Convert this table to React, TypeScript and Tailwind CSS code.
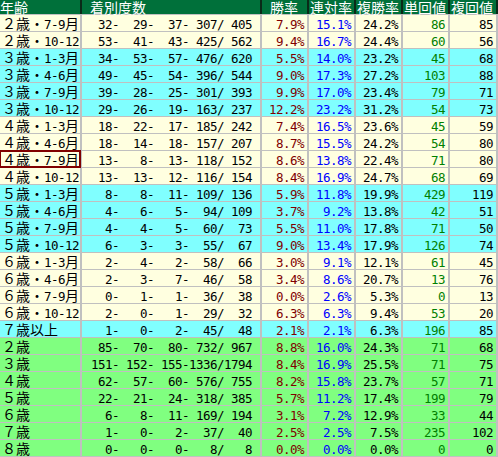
const cols = 'grid grid-cols-[80px_178px_45px_45px_45px_45px_46px] gap-x-[2px]'
const jp = "font-['Noto_Sans_CJK_JP','Noto_Sans_CJK_SC',sans-serif] text-[14px]"
const mono = "font-['DejaVu_Sans_Mono',monospace] text-[12.5px] tracking-[-0.53px] leading-none"

type Row = [string, number[], string, string, string, number, number, string]

const CREAM = 'bg-[#ffffe0]'
const CYAN = 'bg-[#80ffff]'
const GREEN = 'bg-[#80ff80]'

const rows: Row[] = [
  ['２歳・7-9月', [32, 29, 37, 307, 405], '7.9%', '15.1%', '24.2%', 86, 85, CREAM],
  ['２歳・10-12', [53, 41, 43, 425, 562], '9.4%', '16.7%', '24.4%', 60, 56, CREAM],
  ['３歳・1-3月', [34, 53, 57, 476, 620], '5.5%', '14.0%', '23.2%', 45, 68, CYAN],
  ['３歳・4-6月', [49, 45, 54, 396, 544], '9.0%', '17.3%', '27.2%', 103, 88, CYAN],
  ['３歳・7-9月', [39, 28, 25, 301, 393], '9.9%', '17.0%', '23.4%', 79, 71, CYAN],
  ['３歳・10-12', [29, 26, 19, 163, 237], '12.2%', '23.2%', '31.2%', 54, 73, CYAN],
  ['４歳・1-3月', [18, 22, 17, 185, 242], '7.4%', '16.5%', '23.6%', 45, 59, CREAM],
  ['４歳・4-6月', [18, 14, 18, 157, 207], '8.7%', '15.5%', '24.2%', 54, 80, CREAM],
  ['４歳・7-9月', [13, 8, 13, 118, 152], '8.6%', '13.8%', '22.4%', 71, 80, CREAM],
  ['４歳・10-12', [13, 13, 12, 116, 154], '8.4%', '16.9%', '24.7%', 68, 69, CREAM],
  ['５歳・1-3月', [8, 8, 11, 109, 136], '5.9%', '11.8%', '19.9%', 429, 119, CYAN],
  ['５歳・4-6月', [4, 6, 5, 94, 109], '3.7%', '9.2%', '13.8%', 42, 51, CYAN],
  ['５歳・7-9月', [4, 4, 5, 60, 73], '5.5%', '11.0%', '17.8%', 71, 50, CYAN],
  ['５歳・10-12', [6, 3, 3, 55, 67], '9.0%', '13.4%', '17.9%', 126, 74, CYAN],
  ['６歳・1-3月', [2, 4, 2, 58, 66], '3.0%', '9.1%', '12.1%', 61, 45, CREAM],
  ['６歳・4-6月', [2, 3, 7, 46, 58], '3.4%', '8.6%', '20.7%', 13, 76, CREAM],
  ['６歳・7-9月', [0, 1, 1, 36, 38], '0.0%', '2.6%', '5.3%', 0, 13, CREAM],
  ['６歳・10-12', [2, 0, 1, 29, 32], '6.3%', '6.3%', '9.4%', 53, 20, CREAM],
  ['７歳以上', [1, 0, 2, 45, 48], '2.1%', '2.1%', '6.3%', 196, 85, CYAN],
  ['２歳', [85, 70, 80, 732, 967], '8.8%', '16.0%', '24.3%', 71, 68, GREEN],
  ['３歳', [151, 152, 155, 1336, 1794], '8.4%', '16.9%', '25.5%', 71, 75, GREEN],
  ['４歳', [62, 57, 60, 576, 755], '8.2%', '15.8%', '23.7%', 57, 71, GREEN],
  ['５歳', [22, 21, 24, 318, 385], '5.7%', '11.2%', '17.4%', 199, 79, GREEN],
  ['６歳', [6, 8, 11, 169, 194], '3.1%', '7.2%', '12.9%', 33, 44, GREEN],
  ['７歳', [1, 0, 2, 37, 40], '2.5%', '2.5%', '7.5%', 235, 102, GREEN],
  ['８歳', [0, 0, 0, 8, 8], '0.0%', '0.0%', '0.0%', 0, 0, GREEN],
]

const pad = (n: number) => String(n).padStart(4, ' ')
const counts = (c: number[]) => `${pad(c[0])}-${pad(c[1])}-${pad(c[2])}-${pad(c[3])}/${pad(c[4])}`

// half-width runs in the mono face; each full-width char gets a 14px box
function Txt({ s }: { s: string }) {
  const parts = s.match(/[\x20-\x7e]+|[^\x20-\x7e]/g) ?? []
  return (
    <>
      {parts.map((p, i) =>
        /^[\x20-\x7e]/.test(p) ? (
          <span key={i} className={mono}>{p}</span>
        ) : (
          <span key={i} className="inline-block w-[14px] text-center">{p}</span>
        )
      )}
    </>
  )
}

const cell = `h-[16px] leading-[16px] whitespace-pre ${jp}`

export default function App() {
  const heads = ['年齢', '着別度数', '勝率', '連対率', '複勝率', '単回値', '複回値']
  const headPad = ['pl-0', 'pl-[8px]', 'pl-[8px]', 'pl-[1px]', 'pl-[1px]', 'pl-[1px]', 'pl-[1px]']

  return (
    <div className="w-[498px] h-[457px] bg-white">
      <div className="flex flex-col gap-y-[1px] bg-[#c0c0c0] pb-[1px] w-[498px]">
        <div className={`${cols} bg-[#0a2a18] pr-[2px]`}>
          {heads.map((h, i) => (
            <div key={h} className={`h-[14px] leading-[14px] bg-[#00703a] text-white ${jp} ${headPad[i]}`}>
              <Txt s={h} />
            </div>
          ))}
        </div>
        {rows.map((r, i) => (
          <div key={i} className={`${cols} pr-[2px]`}>
            <div
              className={`${cell} ${r[7]} pl-[2px] ${
                i === 8 ? 'outline-2 outline-[#800000] -outline-offset-1 relative' : ''
              }`}
            >
              <Txt s={r[0]} />
            </div>
            <div className={`${cell} ${r[7]} pl-[2px] text-black`}>
              <span className={mono}>{counts(r[1])}</span>
            </div>
            <div className={`${cell} ${r[7]} text-right pr-[3px] text-[#800000]`}>
              <span className={mono}>{r[2]}</span>
            </div>
            <div className={`${cell} ${r[7]} text-right pr-[3px] text-[#0000ff]`}>
              <span className={mono}>{r[3]}</span>
            </div>
            <div className={`${cell} ${r[7]} text-right pr-[3px] text-black`}>
              <span className={mono}>{r[4]}</span>
            </div>
            <div className={`${cell} ${r[7]} text-right pr-[3px] text-[#008000]`}>
              <span className={mono}>{r[5]}</span>
            </div>
            <div className={`${cell} ${r[7]} text-right pr-[3px] text-black`}>
              <span className={mono}>{r[6]}</span>
            </div>
          </div>
        ))}
      </div>
    </div>
  )
}
